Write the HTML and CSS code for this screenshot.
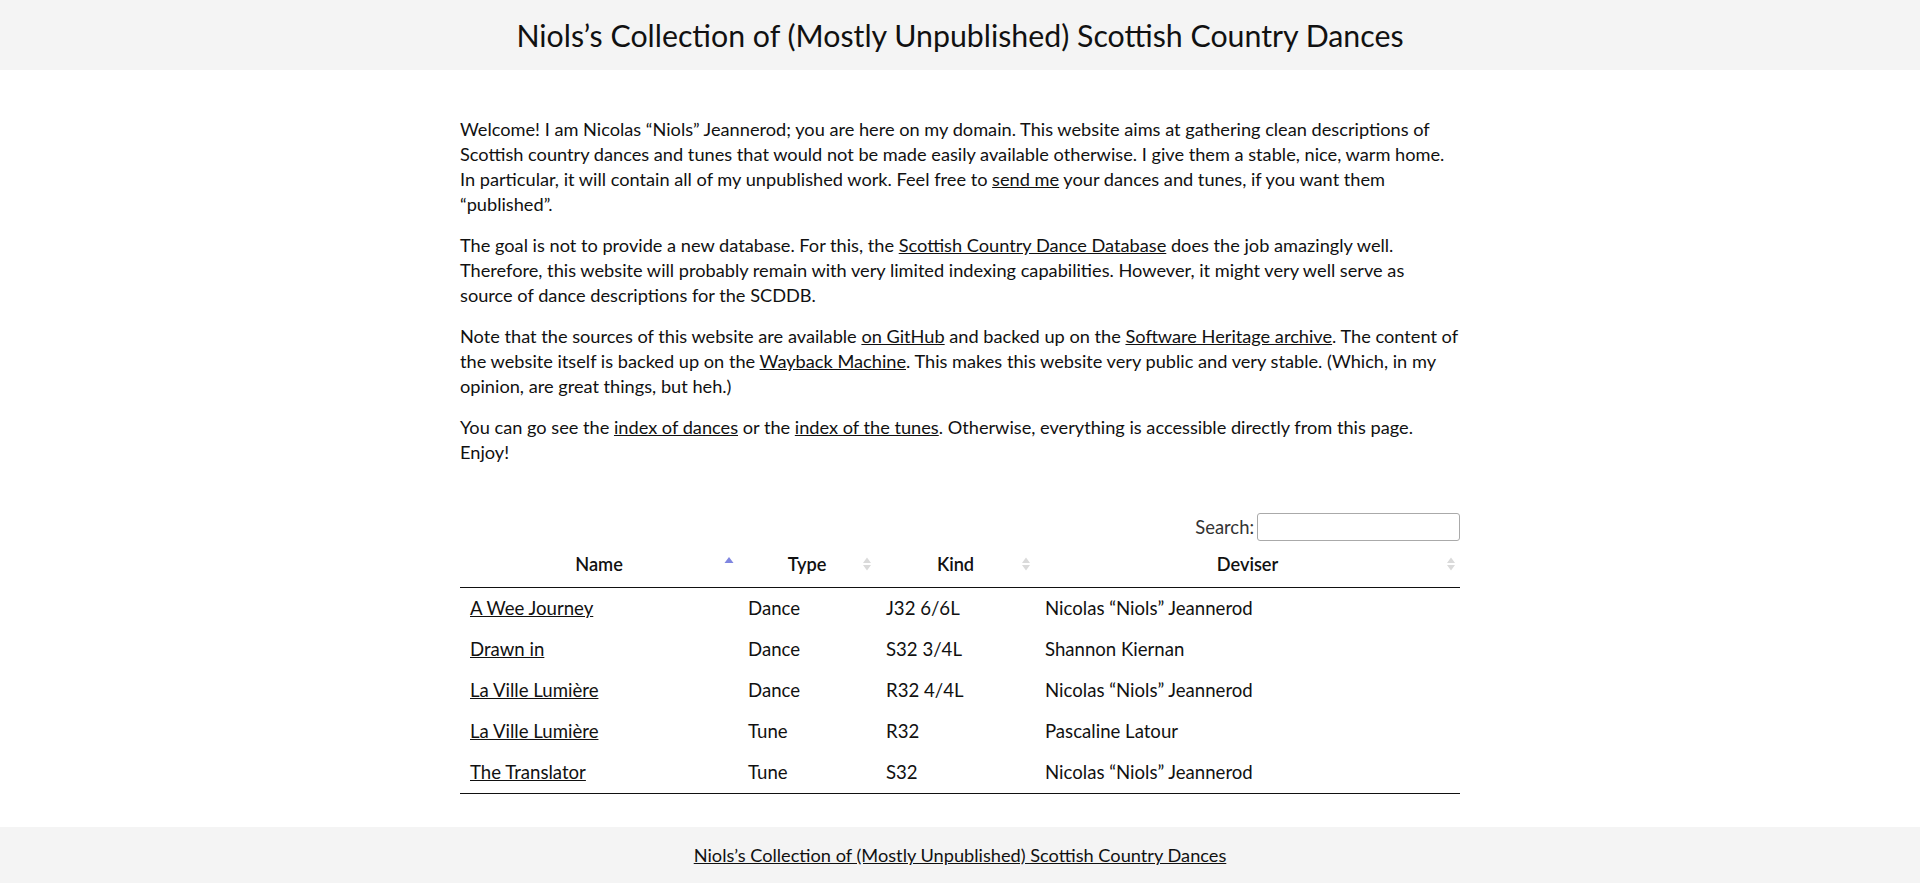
FILE: index.html
```html
<!DOCTYPE html>
<html lang="en">
<head>
<meta charset="utf-8">
<title>Niols’s Collection of (Mostly Unpublished) Scottish Country Dances</title>
<link rel="stylesheet" href="styles.css">
</head>
<body>
<header class="site-header">
  <h1 class="site-title">Niols’s Collection of (Mostly Unpublished) Scottish Country Dances</h1>
</header>

<main class="content">
  <p class="intro">Welcome! I am Nicolas “Niols” Jeannerod; you are here on my domain. This website aims at gathering clean descriptions of Scottish country dances and tunes that would not be made easily available otherwise. I give them a stable, nice, warm home. In particular, it will contain all of my unpublished work. Feel free to <a href="#">send me</a> your dances and tunes, if you want them “published”.</p>
  <p class="intro">The goal is not to provide a new database. For this, the <a href="#">Scottish Country Dance Database</a> does the job amazingly well. Therefore, this website will probably remain with very limited indexing capabilities. However, it might very well serve as source of dance descriptions for the SCDDB.</p>
  <p class="intro">Note that the sources of this website are available <a href="#">on GitHub</a> and backed up on the <a href="#">Software Heritage archive</a>. The content of the website itself is backed up on the <a href="#">Wayback Machine</a>. This makes this website very public and very stable. (Which, in my opinion, are great things, but heh.)</p>
  <p class="intro">You can go see the <a href="#">index of dances</a> or the <a href="#">index of the tunes</a>. Otherwise, everything is accessible directly from this page. Enjoy!</p>

  <section class="table-wrapper">
    <div class="filter">
      <label class="filter-label">Search:<input class="filter-input" type="search"></label>
    </div>
    <table class="dances">
      <colgroup>
        <col class="col-name"><col class="col-type"><col class="col-kind"><col class="col-deviser">
      </colgroup>
      <thead>
        <tr>
          <th><div class="th-inner"><span></span><span class="th-label">Name</span><span class="sort"><svg width="10" height="17" viewBox="0 0 10 17"><path d="M0.5 7 L5 1 L9.5 7 Z" fill="#7f86e0"/></svg></span></div></th>
          <th><div class="th-inner"><span></span><span class="th-label">Type</span><span class="sort"><svg width="10" height="17" viewBox="0 0 10 17"><path d="M1 7 L5 1.5 L9 7 Z M1 9 L5 14.5 L9 9 Z" fill="#dadada"/></svg></span></div></th>
          <th><div class="th-inner"><span></span><span class="th-label">Kind</span><span class="sort"><svg width="10" height="17" viewBox="0 0 10 17"><path d="M1 7 L5 1.5 L9 7 Z M1 9 L5 14.5 L9 9 Z" fill="#dadada"/></svg></span></div></th>
          <th><div class="th-inner"><span></span><span class="th-label">Deviser</span><span class="sort"><svg width="10" height="17" viewBox="0 0 10 17"><path d="M1 7 L5 1.5 L9 7 Z M1 9 L5 14.5 L9 9 Z" fill="#dadada"/></svg></span></div></th>
        </tr>
      </thead>
      <tbody>
        <tr><td><a href="#">A Wee Journey</a></td><td>Dance</td><td>J32 6/6L</td><td>Nicolas “Niols” Jeannerod</td></tr>
        <tr><td><a href="#">Drawn in</a></td><td>Dance</td><td>S32 3/4L</td><td>Shannon Kiernan</td></tr>
        <tr><td><a href="#">La Ville Lumière</a></td><td>Dance</td><td>R32 4/4L</td><td>Nicolas “Niols” Jeannerod</td></tr>
        <tr><td><a href="#">La Ville Lumière</a></td><td>Tune</td><td>R32</td><td>Pascaline Latour</td></tr>
        <tr><td><a href="#">The Translator</a></td><td>Tune</td><td>S32</td><td>Nicolas “Niols” Jeannerod</td></tr>
      </tbody>
    </table>
  </section>
</main>

<footer class="site-footer">
  <a href="#">Niols’s Collection of (Mostly Unpublished) Scottish Country Dances</a>
</footer>
</body>
</html>
```
FILE: styles.css
```css
html, body {
  margin: 0;
  padding: 0;
}
body {
  font-family: "Lato", "Roboto", sans-serif;
  font-size: 18px;
  line-height: 25px;
  color: #111;
  background: #fff;
}
a {
  color: #111;
  text-decoration: underline;
}

.site-header {
  background: #f4f4f4;
}
.site-title {
  margin: 0;
  padding: 15px 0 15px;
  font-size: 30.3px;
  line-height: 40px;
  font-weight: 400;
  text-align: center;
}

.content {
  width: 1000px;
  margin: 0 auto;
  padding-top: 31px;
}
.intro {
  margin: 16px 0;
  font-size: 18.19px;
}

.table-wrapper {
  margin-top: 48px;
}
.filter {
  display: flex;
  justify-content: flex-end;
  height: 28px;
}
.filter-label {
  display: flex;
  align-items: center;
  color: #333;
  font-size: 18.4px;
}
.filter-input {
  margin-left: 3px;
  width: 203px;
  height: 28px;
  box-sizing: border-box;
  border: 1px solid #aaa;
  border-radius: 3px;
  padding: 4px;
  background: transparent;
  font: inherit;
}

.dances {
  width: 1000px;
  table-layout: fixed;
  border-collapse: collapse;
  font-size: 18.6px;
  line-height: 25px;
}
.col-name { width: 278px; }
.col-type { width: 138px; }
.col-kind { width: 159px; }
.col-deviser { width: 425px; }

.dances th {
  padding: 11px 4px 10px;
  font-size: 18.2px;
  font-weight: 600;
  border-bottom: 1px solid #111;
}
.th-inner {
  display: grid;
  grid-template-columns: 10px 1fr 10px;
  align-items: center;
}
.th-label {
  text-align: center;
}
.sort {
  display: flex;
  align-items: center;
  justify-content: center;
  height: 25px;
}
.sort svg {
  display: block;
  margin-top: -1px;
}

.dances td {
  padding: 8px 10px;
  text-align: left;
  white-space: nowrap;
}
.dances tbody tr:last-child td {
  border-bottom: 1px solid #111;
}

.site-footer {
  margin-top: 33px;
  background: #f4f4f4;
  padding: 16px 0 20px;
  text-align: center;
  font-size: 18.2px;
}
```
